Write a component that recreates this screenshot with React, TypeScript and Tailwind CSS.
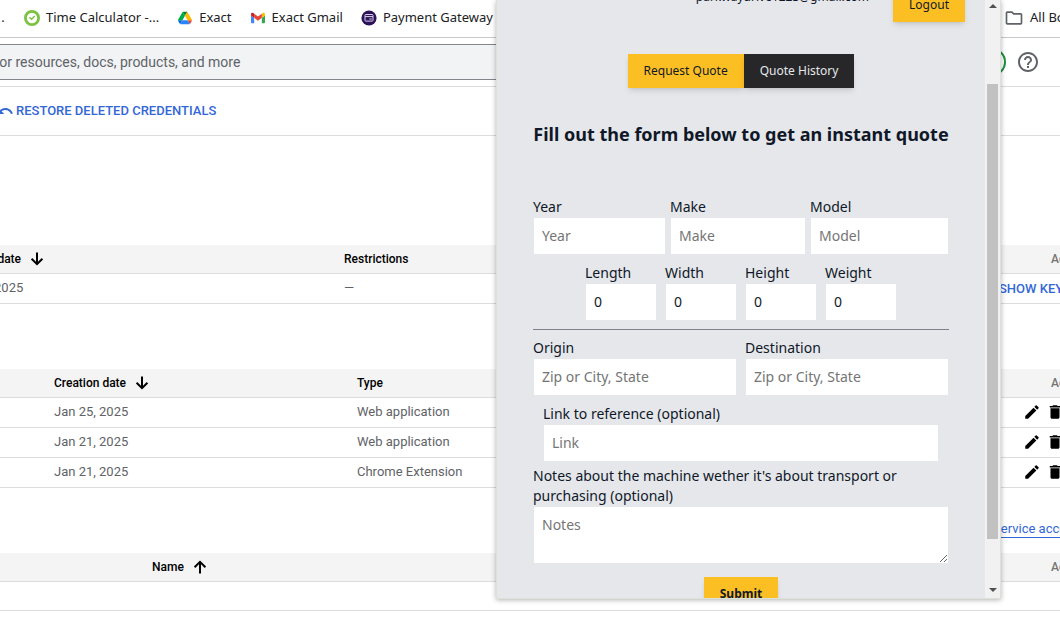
import type { ReactNode } from "react";
import { MdDelete, MdEdit, MdHelpOutline, MdOutlineFolder, MdUndo } from "react-icons/md";

const roboto = "font-[Roboto,sans-serif]";
const noto = "font-['Noto_Sans',sans-serif]";

function ClockLogo() {
  return (
    <svg viewBox="0 0 16 16" className="size-4" aria-hidden="true">
      <circle cx="8" cy="8" r="6.6" fill="#fff" stroke="#7cc242" strokeWidth="2.8" />
      <path d="M5.4 7.2 7.6 9.2 10.8 6" fill="none" stroke="#7cc242" strokeWidth="1.5" />
    </svg>
  );
}

function DriveLogo() {
  return (
    <svg viewBox="0 0 87.3 78" className="h-4 w-4 px-px" aria-hidden="true">
      <path d="m6.6 66.85 3.85 6.65c.8 1.4 1.95 2.5 3.3 3.3l13.75-23.8h-27.5c0 1.55.4 3.1 1.2 4.5z" fill="#0066da" />
      <path d="m43.65 25-13.75-23.8c-1.35.8-2.5 1.9-3.3 3.3l-25.4 44a9.06 9.06 0 0 0 -1.2 4.5h27.5z" fill="#00ac47" />
      <path d="m73.55 76.8c1.35-.8 2.5-1.9 3.3-3.3l1.6-2.75 7.65-13.25c.8-1.4 1.2-2.95 1.2-4.5h-27.5l5.85 11.5z" fill="#ea4335" />
      <path d="m43.65 25 13.75-23.8c-1.35-.8-2.9-1.2-4.5-1.2h-18.5c-1.6 0-3.15.45-4.5 1.2z" fill="#00832d" />
      <path d="m59.8 53h-32.3l-13.75 23.8c1.35.8 2.9 1.2 4.5 1.2h50.8c1.6 0 3.15-.45 4.5-1.2z" fill="#2684fc" />
      <path d="m73.4 26.5-12.7-22c-.8-1.4-1.95-2.5-3.3-3.3l-13.75 23.8 16.15 28h27.45c0-1.55-.4-3.1-1.2-4.5z" fill="#ffba00" />
    </svg>
  );
}

function GmailLogo() {
  return (
    <svg viewBox="52 42 88 66" className="h-4 w-4 px-px" aria-hidden="true">
      <path fill="#4285f4" d="M58 108h14V74L52 59v43c0 3.32 2.69 6 6 6" />
      <path fill="#34a853" d="M120 108h14c3.32 0 6-2.69 6-6V59l-20 15" />
      <path fill="#fbbc04" d="M120 48v26l20-15v-8c0-7.42-8.47-11.65-14.4-7.2" />
      <path fill="#ea4335" d="M72 74V48l24 18 24-18v26L96 92" />
      <path fill="#c5221f" d="M52 51v8l20 15V48l-5.6-4.2c-5.94-4.45-14.4-.22-14.4 7.2" />
    </svg>
  );
}

function GatewayLogo() {
  return (
    <svg viewBox="0 0 16 16" className="size-4" aria-hidden="true">
      <circle cx="8" cy="8" r="7.6" fill="#2b1259" />
      <rect x="4" y="4.5" width="8" height="6.6" rx="0.8" fill="none" stroke="#d9d0ea" strokeWidth="1" />
      <path d="M4 6.6h8M8.4 9h2.4" stroke="#d9d0ea" strokeWidth="1" />
    </svg>
  );
}

function Bookmark({ icon, children }: { icon: ReactNode; children: ReactNode }) {
  return (
    <a href="#" className="flex shrink-0 items-center gap-[6px]">
      {icon}
      {children}
    </a>
  );
}

const dataTable =
  "table-fixed border-separate border-spacing-0 [&_td]:border-b [&_td]:border-[#dadce0] [&_th]:border-b [&_th]:border-[#dadce0]";
const headRow = "h-[29px] bg-[#f4f4f4] text-left text-xs text-black";
const bodyRow = "h-[30px]";

function SortLabel({ children, up }: { children: ReactNode; up?: boolean }) {
  return (
    <button type="button" className="flex items-center gap-[7px] font-medium">
      {children}
      <svg viewBox="0 0 18 18" className="size-[18px]" fill="none" stroke="currentColor" strokeWidth="2" aria-hidden="true">
        <path d={up ? "M9 15.5V4M3.6 9.2 9 3.8l5.4 5.4" : "M9 2.5V14M3.6 8.8 9 14.2l5.4-5.4"} />
      </svg>
    </button>
  );
}

function ActionsHead() {
  return <th className="p-0 pl-[52px] font-medium text-[#757575]">Actions</th>;
}

function Field({
  id,
  label,
  placeholder,
  value,
  className = "",
}: {
  id: string;
  label: string;
  placeholder?: string;
  value?: string;
  className?: string;
}) {
  return (
    <div className={className}>
      <label htmlFor={id} className="block">
        {label}
      </label>
      <input
        id={id}
        type="text"
        placeholder={placeholder}
        defaultValue={value}
        className="block w-full border border-gray-200 bg-white px-2 py-2 placeholder:text-[#757575]"
      />
    </div>
  );
}

function QuotePopup() {
  const button = "px-4 py-2 text-xs leading-[18px] shadow-md";
  return (
    <aside
      className={`absolute top-0 right-[59px] flex h-[599px] w-[505px] overflow-hidden border border-t-0 border-[#dde2d8] bg-[#e5e7eb] text-sm text-gray-900 shadow-[0_1px_5px_rgba(0,0,0,0.3)] ${noto}`}
    >
      <div className="-mt-3 min-w-0 flex-1">
        <header className="flex items-start justify-end gap-6 pr-5">
          <span className="text-xs leading-[18px]">parkwaydrive1223@gmail.com</span>
          <button type="button" className={`bg-[#fbbf24] ${button}`}>
            Logout
          </button>
        </header>
        <nav className="mt-8 flex justify-center">
          <button type="button" className={`bg-[#fbbf24] ${button}`}>
            Request Quote
          </button>
          <button type="button" className={`bg-[#27272a] text-gray-200 ${button}`}>
            Quote History
          </button>
        </nav>
        <form className="px-9">
          <h1 className="mt-8 text-center text-lg font-bold whitespace-nowrap">
            Fill out the form below to get an instant quote
          </h1>
          <div className="mt-[49px] grid grid-cols-[133fr_136fr_139fr] gap-1">
            <Field id="year" label="Year" placeholder="Year" />
            <Field id="make" label="Make" placeholder="Make" />
            <Field id="model" label="Model" placeholder="Model" />
          </div>
          <div className="mt-2 flex justify-center gap-2">
            <Field id="length" label="Length" value="0" className="w-[72px]" />
            <Field id="width" label="Width" value="0" className="w-[72px]" />
            <Field id="height" label="Height" value="0" className="w-[72px]" />
            <Field id="weight" label="Weight" value="0" className="w-[72px]" />
          </div>
          <hr className="my-2 border-[#7d8190]" />
          <div className="grid grid-cols-2 gap-2">
            <Field id="origin" label="Origin" placeholder="Zip or City, State" />
            <Field id="destination" label="Destination" placeholder="Zip or City, State" />
          </div>
          <Field id="link" label="Link to reference (optional)" placeholder="Link" className="mx-[10px] mt-2" />
          <label htmlFor="notes" className="mt-1 block">
            Notes about the machine wether it's about transport or purchasing (optional)
          </label>
          <textarea
            id="notes"
            rows={2}
            placeholder="Notes"
            className="block w-full border border-gray-200 bg-white p-2 placeholder:text-[#757575]"
          />
          <div className="mt-[13px] flex justify-center">
            <button type="submit" className={`bg-[#fbbf24] font-bold ${button}`}>
              Submit
            </button>
          </div>
        </form>
      </div>
      <div className="flex w-[15px] shrink-0 flex-col items-center justify-between bg-[#f1f1f1] pt-1 pb-[6px]" aria-hidden="true">
        <svg viewBox="0 0 8 4" className="h-1 w-2">
          <path d="M0 4 4 0 8 4z" fill="#505050" />
        </svg>
        <div className="mt-[76px] mb-[49px] w-[11px] flex-1 bg-[#c1c1c1]" />
        <svg viewBox="0 0 8 4" className="h-1 w-2">
          <path d="M0 0 4 4 8 0z" fill="#505050" />
        </svg>
      </div>
    </aside>
  );
}

export default function App() {
  return (
    <div className={`relative min-h-screen overflow-hidden bg-white text-[13px] text-[#5f6368] ${roboto}`}>
      <nav className={`flex h-[38px] items-center justify-between border-b border-[#c8c8c8] pb-[2px] text-[#202124] ${noto}`}>
        <div className="flex items-center gap-[18px]">
          <span className="w-[6px] text-center">.</span>
          <Bookmark icon={<ClockLogo />}>Time Calculator -...</Bookmark>
          <Bookmark icon={<DriveLogo />}>Exact</Bookmark>
          <Bookmark icon={<GmailLogo />}>Exact Gmail</Bookmark>
          <Bookmark icon={<GatewayLogo />}>Payment Gateway</Bookmark>
        </div>
        <div className="flex w-[56px]">
          <Bookmark icon={<MdOutlineFolder className="size-5 text-[#5f6368]" />}>All Bookmarks</Bookmark>
        </div>
      </nav>

      <header className="flex h-[49px] items-center border-b border-[#dadce0]">
        <input
          type="text"
          aria-label="Search"
          placeholder="Search (/) for resources, docs, products, and more"
          className="-ml-[84px] h-9 flex-1 border border-[#80868b] bg-[#f1f3f4] px-3 text-sm placeholder:text-[#5f6368]"
        />
        <span className="ml-2 size-7 rounded-full border-2 border-[#1e8e3e]" />
        <button type="button" aria-label="Help" className="mr-5 ml-[10px]">
          <MdHelpOutline className="size-6" />
        </button>
      </header>

      <div className="-ml-1 flex h-[49px] items-center border-b border-[#dadce0]">
        <button type="button" className="flex items-center gap-[2px] font-medium text-[#3367d6]">
          <MdUndo className="size-[18px]" />
          RESTORE DELETED CREDENTIALS
        </button>
      </div>

      <table className={`mt-[109px] -ml-[51px] w-[1171px] ${dataTable}`}>
        <colgroup>
          <col className="w-[395px]" />
          <col />
          <col className="w-[121px]" />
        </colgroup>
        <thead>
          <tr className={headRow}>
            <th className="p-0">
              <SortLabel>Creation date</SortLabel>
            </th>
            <th className="p-0 font-medium">Restrictions</th>
            <ActionsHead />
          </tr>
        </thead>
        <tbody>
          <tr className={bodyRow}>
            <td className="pb-[2px]">Jan 21, 2025</td>
            <td className="pb-[2px]">—</td>
            <td>
              <button type="button" className="block font-medium text-[#3367d6]">
                SHOW KEY
              </button>
            </td>
          </tr>
        </tbody>
      </table>

      <table className={`mt-[65px] w-[1120px] ${dataTable}`}>
        <colgroup>
          <col className="w-[357px]" />
          <col />
          <col className="w-[121px]" />
        </colgroup>
        <thead>
          <tr className={headRow}>
            <th className="p-0 pl-[54px]">
              <SortLabel>Creation date</SortLabel>
            </th>
            <th className="p-0 font-medium">Type</th>
            <ActionsHead />
          </tr>
        </thead>
        <tbody>
          {[
            ["Jan 25, 2025", "Web application"],
            ["Jan 21, 2025", "Web application"],
            ["Jan 21, 2025", "Chrome Extension"],
          ].map(([date, type], i) => (
            <tr key={i} className={bodyRow}>
              <td className="pb-[2px] pl-[54px]">{date}</td>
              <td className="pb-[2px]">{type}</td>
              <td className="pb-[2px] pl-6">
                <div className="flex gap-[5px] text-black">
                  <button type="button" aria-label="Edit">
                    <MdEdit className="size-[18px]" />
                  </button>
                  <button type="button" aria-label="Delete">
                    <MdDelete className="size-[18px]" />
                  </button>
                </div>
              </td>
            </tr>
          ))}
        </tbody>
      </table>

      <div className="flex h-[65px] w-[1120px] items-center justify-end pt-[18px] pr-7">
        <a href="#" className="border-b border-[#3367d6] leading-4 whitespace-nowrap text-[#3367d6]">
          Manage service accounts
        </a>
      </div>

      <table className={`w-[1120px] ${dataTable}`}>
        <colgroup>
          <col />
          <col className="w-[121px]" />
        </colgroup>
        <thead>
          <tr className={headRow}>
            <th className="p-0 pl-[152px]">
              <SortLabel up>Name</SortLabel>
            </th>
            <ActionsHead />
          </tr>
        </thead>
        <tbody>
          <tr className="h-[29px]">
            <td />
            <td />
          </tr>
        </tbody>
      </table>

      <QuotePopup />
    </div>
  );
}
